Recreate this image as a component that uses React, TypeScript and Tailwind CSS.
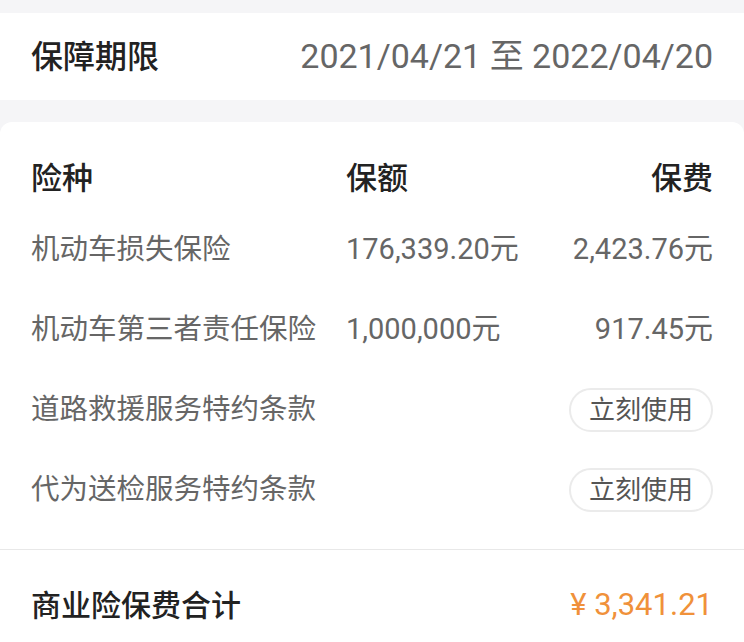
const rows = [
  { name: '机动车损失保险', amount: '176,339.20元', fee: '2,423.76元' },
  { name: '机动车第三者责任保险', amount: '1,000,000元', fee: '917.45元' },
  { name: '道路救援服务特约条款', action: '立刻使用' },
  { name: '代为送检服务特约条款', action: '立刻使用' },
];

export default function App() {
  return (
    <div
      className="min-h-[642px] bg-[#f5f5f7] pt-[13px] overflow-hidden"
      style={{ fontFamily: 'Roboto, "Noto Sans CJK SC", sans-serif' }}
    >
      {/* Coverage period */}
      <div className="h-[87px] bg-white px-[31px] flex items-center justify-between">
        <span className="text-[32px] font-medium text-[#222]">保障期限</span>
        <span className="text-[34px] text-[#666]">2021/04/21 至 2022/04/20</span>
      </div>

      {/* Insurance table */}
      <div className="mt-[22px] bg-white rounded-t-[12px]">
        <div className="px-[31px] pt-[34px] pb-[19px]">
          <div className="grid grid-cols-[315px_1fr_auto] h-[44px] items-center text-[31px] font-medium text-[#222]">
            <span>险种</span>
            <span>保额</span>
            <span className="text-right">保费</span>
          </div>
          <div className="mt-[10px]">
            {rows.map((row) => (
              <div
                key={row.name}
                className="grid grid-cols-[315px_1fr_auto] h-[80px] items-center text-[28.5px] text-[#666]"
              >
                <span className="whitespace-nowrap">{row.name}</span>
                <span className="text-[29px]">{row.amount}</span>
                {row.action ? (
                  <button className="h-[44px] w-[144px] rounded-full border-2 border-[#ebebeb] text-[26px] text-[#555] flex items-center justify-center">
                    {row.action}
                  </button>
                ) : (
                  <span className="text-right text-[29px]">{row.fee}</span>
                )}
              </div>
            ))}
          </div>
        </div>
        <div className="h-px bg-[#e8e8e8]" />
        <div className="h-[110px] px-[31px] flex items-center justify-between">
          <span className="text-[30px] font-medium text-[#222]">商业险保费合计</span>
          <span className="text-[31px] text-[#f0913a]">¥ 3,341.21</span>
        </div>
      </div>
    </div>
  );
}
